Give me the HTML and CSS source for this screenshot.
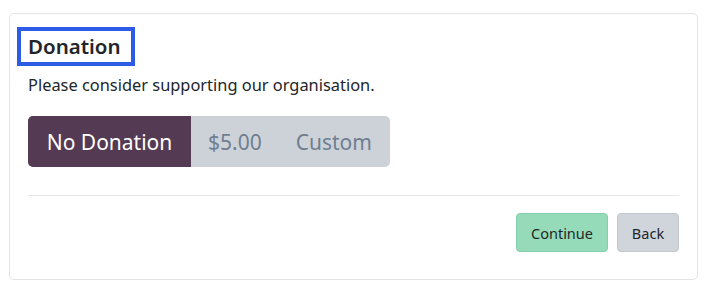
FILE: index.html
```html
<!DOCTYPE html>
<html lang="en">
<head>
<meta charset="utf-8">
<title>Donation</title>
<link rel="stylesheet" href="styles.css">
</head>
<body>
<div class="card">
  <h2 class="title">Donation</h2>
  <p class="lead">Please consider supporting our organisation.</p>
  <div class="choices">
    <button class="choice active">No Donation</button>
    <button class="choice">$5.00</button>
    <button class="choice">Custom</button>
  </div>
  <hr class="sep">
  <div class="actions">
    <button class="btn btn-continue">Continue</button>
    <button class="btn btn-back">Back</button>
  </div>
</div>
</body>
</html>
```

FILE: styles.css
```css
* { box-sizing: border-box; }
html, body { margin: 0; background: #fff; }
body {
  font-family: "Noto Sans", "Open Sans", sans-serif;
  color: #212529;
  padding: 13px 8px 0 9px;
}
.card {
  width: 689px;
  height: 267px;
  border: 1px solid #e3e3e3;
  border-radius: 5px;
  padding: 17px 18px 27px 18px;
}
.title {
  display: inline-block;
  margin: 0 0 0 -7px;
  padding: 0 10px 0 7px;
  font-size: 20.5px;
  font-weight: 600;
  line-height: 31px;
  outline: 4px solid #2c5be6;
  color: #212529;
}
.lead {
  margin: 10px 0 0 0;
  font-size: 16.4px;
  line-height: 26px;
}
.choices {
  display: flex;
  width: 362px;
  height: 51px;
  margin-top: 18px;
  border-radius: 5px;
  overflow: hidden;
  background: #cdd2d9;
}
.choice {
  border: 0;
  background: transparent;
  font-family: inherit;
  font-size: 21px;
  color: #6f7e90;
  padding: 0 17px;
}
.choice.active {
  background: #543a52;
  color: #fff;
  width: 163px;
  padding: 0;
}
.sep {
  border: 0;
  border-top: 1px solid #e6e6e6;
  margin: 28px 0 0 0;
}
.actions {
  display: flex;
  justify-content: flex-end;
  gap: 9px;
  margin-top: 17px;
}
.btn {
  height: 39px;
  border-radius: 4px;
  font-family: inherit;
  font-size: 14.5px;
  color: #1e2a24;
  padding: 0 13px;
}
.btn-continue {
  background: #95dbb9;
  border: 1px solid #86cfac;
  width: 92px;
}
.btn-back {
  background: #d0d5dc;
  border: 1px solid #c2c8cf;
  width: 62px;
  color: #212529;
}
```
